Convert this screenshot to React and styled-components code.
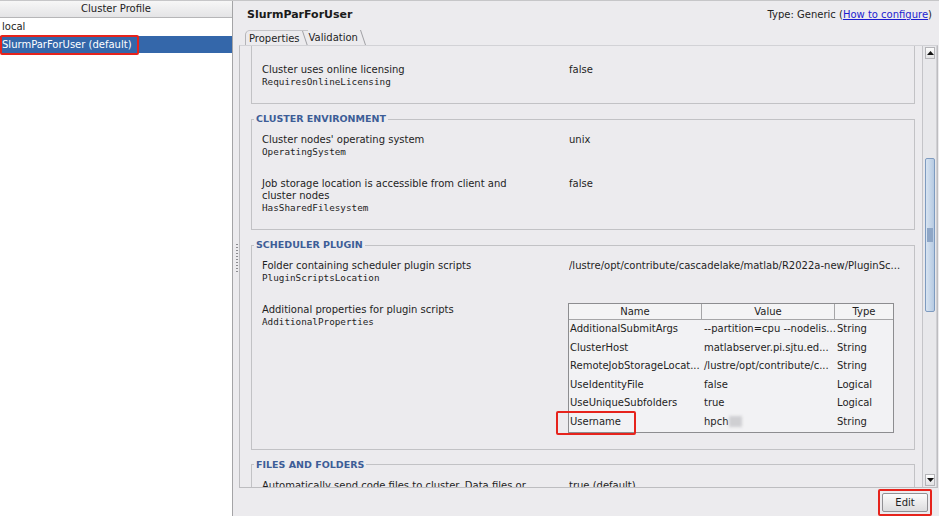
import React from 'react';
import styled, { createGlobalStyle } from 'styled-components';

const GlobalStyle = createGlobalStyle`
    html, body {
        margin: 0;
        padding: 0;
        background: #ecebee;
    }
    body {
        font-family: "DejaVu Sans", "Liberation Sans", sans-serif;
        font-size: 10px;
        color: #1e1e1e;
    }
    * {
        box-sizing: border-box;
    }
`;

const Root = styled.div`
    display: flex;
    width: 939px;
    height: 516px;
    overflow: hidden;
    background: #ecebee;
    border-top: 1px solid #c6c6c8;
`;

const ProfilePanel = styled.div`
    width: 233px;
    display: flex;
    flex-direction: column;
    background: #fff;
    border-right: 1px solid #a4a4a6;
`;
const ListHeader = styled.div`
    height: 17px;
    line-height: 16px;
    text-align: center;
    color: #222;
    background: linear-gradient(#f7f7f7, #e4e4e6);
    border-bottom: 1px solid #b6b6b8;
`;
const ListItem = styled.div`
    position: relative;
    height: 17.5px;
    line-height: 17.5px;
    padding-left: 2px;
    white-space: nowrap;
    background: ${p => (p.$selected ? '#3467aa' : 'transparent')};
    color: ${p => (p.$selected ? '#fff' : '#1e1e1e')};
`;
// red annotation frames drawn over the screenshot
const Mark = styled.span`
    position: absolute;
    left: ${p => p.$left}px;
    top: ${p => p.$top}px;
    width: ${p => p.$w}px;
    height: ${p => p.$h}px;
    border: 2px solid #e6231c;
    border-radius: 2px;
    pointer-events: none;
`;

const Splitter = styled.div`
    width: 6px;
    display: flex;
    align-items: center;
    justify-content: center;
    padding-left: 2px;
`;
const Grip = styled.div`
    width: 2px;
    height: 30px;
    background: repeating-linear-gradient(to bottom, #8c8c90 0 1px, transparent 1px 3px);
`;

const DetailPanel = styled.div`
    flex: 1;
    min-width: 0;
    display: flex;
    flex-direction: column;
`;
const TitleBar = styled.div`
    height: 26px;
    display: flex;
    align-items: center;
    justify-content: space-between;
    padding: 0 7px 0 8px;
`;
const ProfileName = styled.span`
    font-size: 11px;
    font-weight: bold;
    color: #1a1a1a;
`;
const TypeInfo = styled.span`
    color: #222;
    & a {
        color: #1d1dd0;
        text-decoration: underline;
    }
`;

const TabStrip = styled.div`
    height: 18px;
    display: flex;
    align-items: flex-end;
    padding-left: 6px;
`;
const Tab = styled.div`
    height: 15px;
    display: flex;
    align-items: center;
    padding-left: ${p => (p.$active ? 3 : 1)}px;
    color: #1e1e1e;
    border-left: ${p => (p.$active ? '1px solid #b4b4b8' : 'none')};
    border-top: ${p => (p.$active ? '1px solid #c4c4c8' : 'none')};
    border-top-left-radius: 5px;
    & svg {
        margin-left: 2px;
        align-self: stretch;
    }
`;

const PaneBody = styled.div`
    flex: 1;
    min-height: 0;
    display: flex;
    border: 1px solid #bdbdc0;
    border-top-color: #d2d2d6;
    margin-right: 1px;
`;
const Viewport = styled.div`
    flex: 1;
    min-width: 0;
    overflow: hidden;
    display: flex;
    flex-direction: column;
    gap: 9px;
    padding: 0 7px 0 11px;
`;
const Group = styled.fieldset`
    margin: 0;
    min-width: 0;
    flex-shrink: 0;
    padding: ${p => (p.$clipped ? 18 : 9)}px 9px 15px 10px;
    border: 1px solid #c2c2c5;
    border-top-width: ${p => (p.$clipped ? 0 : 1)}px;
    display: flex;
    flex-direction: column;
    gap: 20px;
`;
const Legend = styled.legend`
    padding: 0 2px;
    margin-left: -8px;
    font-size: 9.5px;
    font-weight: bold;
    line-height: 12px;
    color: #3d5d97;
`;
const PropRow = styled.div`
    display: grid;
    grid-template-columns: 307px 1fr;
    line-height: 12px;
`;
const PropLabel = styled.div`
    display: flex;
    flex-direction: column;
    max-width: 272px;
`;
const Key = styled.span`
    font-family: "DejaVu Sans Mono", "Liberation Mono", monospace;
    font-size: 9.3px;
`;
const PropValue = styled.div`
    white-space: nowrap;
    overflow: ${p => (p.$clip ? 'hidden' : 'visible')};
    min-width: 0;
`;

const PropTable = styled.div`
    width: 326px;
    margin: -1px 0 1px -1px;
    border: 1px solid #8d8d90;
    background: #f2f2f4;
`;
const TableLine = styled.div`
    display: grid;
    grid-template-columns: 133px 133px 1fr;
    height: ${p => (p.$head ? '16px' : '18.6px')};
    line-height: ${p => (p.$head ? '15px' : '18.6px')};
    background: ${p => (p.$head ? '#f4f4f5' : 'transparent')};
    border-bottom: ${p => (p.$head ? '1px solid #a6a6a8' : 'none')};
`;
const HeadCell = styled.div`
    text-align: center;
    border-right: ${p => (p.$last ? 'none' : '1px solid #a6a6a8')};
`;
const Cell = styled.div`
    position: relative;
    padding-left: ${p => (p.$first ? 1 : 2)}px;
    white-space: nowrap;
`;
const Redacted = styled.span`
    display: inline-block;
    width: 13px;
    height: 11px;
    vertical-align: middle;
    background: #cfcfd2;
    filter: blur(1.5px);
`;

const ScrollBar = styled.div`
    width: 15px;
    display: flex;
    flex-direction: column;
    padding: 1px 1px 1px 2px;
    border-left: 1px solid #c4c4c8;
    border-right: 1px solid #d0d0d4;
    background: #e8e8eb;
`;
const ArrowButton = styled.div`
    height: 12px;
    display: flex;
    align-items: center;
    justify-content: center;
    border: 1px solid #b4b4b8;
    background: linear-gradient(#fdfdfd, #e2e2e4);
`;
const Track = styled.div`
    flex: 1;
    padding-top: ${p => p.$offset}px;
`;
const Thumb = styled.div`
    height: ${p => p.$size}px;
    display: flex;
    align-items: center;
    justify-content: center;
    border: 1px solid #7e9bc0;
    border-radius: 2px;
    background: linear-gradient(to right, #d8e4f1, #b6cae2);
`;
const ThumbGrip = styled.div`
    width: 6px;
    height: 14px;
    background: radial-gradient(circle, #8ea6c6 0.8px, transparent 1px) 0 0 / 2px 2px;
`;

const ButtonBar = styled.div`
    height: 28px;
    display: flex;
    align-items: center;
    justify-content: flex-end;
    padding-right: 7px;
`;
const Highlight = styled.div`
    padding: 2px;
    border: 2px solid #e6231c;
    border-radius: 2px;
`;
const EditButton = styled.button`
    width: 46px;
    height: 19px;
    padding: 0;
    font-family: inherit;
    font-size: 10px;
    color: #1e1e1e;
    border: 1px solid #909094;
    border-radius: 2px;
    background: linear-gradient(#fbfbfb, #dcdcde);
`;

const Slash = () => (
    <svg width="6" height="15" viewBox="0 0 6 15">
        <line x1="0.5" y1="0" x2="5.5" y2="15" stroke="#a0a0a4" strokeWidth="1" />
    </svg>
);

const Arrow = ({ down }) => (
    <svg width="7" height="4" viewBox="0 0 7 4">
        <polygon points={down ? '0,0 7,0 3.5,4' : '0,4 7,4 3.5,0'} fill="#111" />
    </svg>
);

const Property = ({ label, keyName, clip, children }) => (
    <PropRow>
        <PropLabel>
            <span>{label}</span>
            {keyName && <Key>{keyName}</Key>}
        </PropLabel>
        <PropValue $clip={clip}>{children}</PropValue>
    </PropRow>
);

const pluginProps = [
    ['AdditionalSubmitArgs', '--partition=cpu --nodelis...', 'String'],
    ['ClusterHost', 'matlabserver.pi.sjtu.ed...', 'String'],
    ['RemoteJobStorageLocat...', '/lustre/opt/contribute/c...', 'String'],
    ['UseIdentityFile', 'false', 'Logical'],
    ['UseUniqueSubfolders', 'true', 'Logical'],
    ['Username', 'hpch', 'String'],
];

export default function App() {
    return (
        <>
            <GlobalStyle />
            <Root>
                <ProfilePanel>
                    <ListHeader>Cluster Profile</ListHeader>
                    <ListItem>local</ListItem>
                    <ListItem $selected>
                        SlurmParForUser (default)
                        <Mark $left={0} $top={-1} $w={139} $h={20} />
                    </ListItem>
                </ProfilePanel>
                <Splitter>
                    <Grip />
                </Splitter>
                <DetailPanel>
                    <TitleBar>
                        <ProfileName>SlurmParForUser</ProfileName>
                        <TypeInfo>
                            Type: Generic (<a>How to configure</a>)
                        </TypeInfo>
                    </TitleBar>
                    <TabStrip>
                        <Tab $active>Properties<Slash /></Tab>
                        <Tab>Validation<Slash /></Tab>
                    </TabStrip>
                    <PaneBody>
                        <Viewport>
                            <Group $clipped>
                                <Property label="Cluster uses online licensing" keyName="RequiresOnlineLicensing">false</Property>
                            </Group>
                            <Group>
                                <Legend>CLUSTER ENVIRONMENT</Legend>
                                <Property label="Cluster nodes' operating system" keyName="OperatingSystem">unix</Property>
                                <Property label="Job storage location is accessible from client and cluster nodes" keyName="HasSharedFilesystem">false</Property>
                            </Group>
                            <Group>
                                <Legend>SCHEDULER PLUGIN</Legend>
                                <Property label="Folder containing scheduler plugin scripts" keyName="PluginScriptsLocation" clip>
                                    /lustre/opt/contribute/cascadelake/matlab/R2022a-new/PluginSc...
                                </Property>
                                <Property label="Additional properties for plugin scripts" keyName="AdditionalProperties">
                                    <PropTable>
                                        <TableLine $head>
                                            <HeadCell>Name</HeadCell>
                                            <HeadCell>Value</HeadCell>
                                            <HeadCell $last>Type</HeadCell>
                                        </TableLine>
                                        {pluginProps.map(([name, value, type]) => (
                                            <TableLine key={name}>
                                                <Cell $first>
                                                    {name}
                                                    {name === 'Username' && <Mark $left={-13} $top={-2} $w={80} $h={24} />}
                                                </Cell>
                                                <Cell>
                                                    {value}
                                                    {name === 'Username' && <Redacted />}
                                                </Cell>
                                                <Cell>{type}</Cell>
                                            </TableLine>
                                        ))}
                                    </PropTable>
                                </Property>
                            </Group>
                            <Group>
                                <Legend>FILES AND FOLDERS</Legend>
                                <Property label="Automatically send code files to cluster. Data files or must be sent separately" keyName="AutoAttachFiles">true (default)</Property>
                            </Group>
                        </Viewport>
                        <ScrollBar>
                            <ArrowButton><Arrow /></ArrowButton>
                            <Track $offset={99}>
                                <Thumb $size={154}><ThumbGrip /></Thumb>
                            </Track>
                            <ArrowButton><Arrow down /></ArrowButton>
                        </ScrollBar>
                    </PaneBody>
                    <ButtonBar>
                        <Highlight>
                            <EditButton>Edit</EditButton>
                        </Highlight>
                    </ButtonBar>
                </DetailPanel>
            </Root>
        </>
    );
}
